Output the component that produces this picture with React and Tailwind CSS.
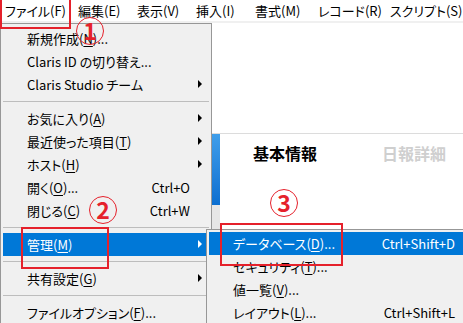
import React from "react";

const font = "font-['Noto_Sans_CJK_JP','Noto_Sans',sans-serif] [font-feature-settings:'palt']";

const menuBar = [
  { label: "ファイル(F)", w: "w-[73px]" },
  { label: "編集(E)", w: "w-[59px]" },
  { label: "表示(V)", w: "w-[59px]" },
  { label: "挿入(I)", w: "w-[59px]" },
  { label: "書式(M)", w: "w-[63px]" },
  { label: "レコード(R)", w: "w-[72px]" },
  { label: "スクリプト(S)", w: "w-[78px]" },
];

const fileMenu = [
  { pre: "新規作成(", key: "N", post: ")..." },
  { pre: "Claris ID の切り替え..." },
  { pre: "Claris Studio チーム", arrow: true },
  { sep: true },
  { pre: "お気に入り(", key: "A", post: ")", arrow: true },
  { pre: "最近使った項目(", key: "T", post: ")", arrow: true },
  { pre: "ホスト(", key: "H", post: ")", arrow: true },
  { pre: "開く(", key: "O", post: ")...", shortcut: "Ctrl+O" },
  { pre: "閉じる(", key: "C", post: ")", shortcut: "Ctrl+W" },
  { sep: true },
  { pre: "管理(", key: "M", post: ")", arrow: true, active: true },
  { sep: true },
  { pre: "共有設定(", key: "G", post: ")", arrow: true },
  { sep: true },
  { pre: "ファイルオプション(", key: "F", post: ")..." },
];

const manageMenu = [
  { pre: "データベース(", key: "D", post: ")...", shortcut: "Ctrl+Shift+D", active: true },
  { pre: "セキュリティ(", key: "T", post: ")..." },
  { pre: "値一覧(", key: "V", post: ")..." },
  { pre: "レイアウト(", key: "L", post: ")...", shortcut: "Ctrl+Shift+L" },
];

const Arrow = ({ white }) => (
  <svg width="4" height="8" viewBox="0 0 4 8" className="absolute right-[7px] top-[7px]">
    <polygon points="0,0 4,4 0,8" fill={white ? "#ffffff" : "#000000"} />
  </svg>
);

const MenuRow = ({ item, pl, pr }) => {
  if (item.sep) {
    return (
      <div className="h-[11px] flex items-center">
        <div className="w-full border-t border-[#bdbdbd]" />
      </div>
    );
  }
  return (
    <div
      className={`relative flex h-[23px] items-center leading-[23px] ${pl} ${pr} ${
        item.active ? "bg-[#0078d7] text-white" : "text-black"
      }`}
    >
      <span className="flex-1 whitespace-nowrap">
        {item.pre}
        {item.key && <u className="underline-offset-2">{item.key}</u>}
        {item.post}
      </span>
      {item.shortcut && <span className="whitespace-nowrap">{item.shortcut}</span>}
      {item.arrow && <Arrow white={item.active} />}
    </div>
  );
};

const Circle = ({ n, className }) => (
  <div
    className={`absolute flex h-[28px] w-[28px] items-center justify-center rounded-full border-[1.5px] border-[#e5212b] pb-[1px] text-[23px] font-bold leading-none text-[#e5212b] ${className}`}
  >
    {n}
  </div>
);

export default function App() {
  return (
    <div className={`relative h-[323px] w-[463px] overflow-hidden bg-white text-[13px] ${font}`}>
      {/* menu bar */}
      <div className="flex h-[23px] border-b-2 border-[#f0f0f0] bg-white">
        {menuBar.map((m) => (
          <div key={m.label} className={`${m.w} shrink-0 whitespace-nowrap pl-[5px] pt-[1px] leading-[20px] text-black`}>
            {m.label}
          </div>
        ))}
      </div>

      {/* window content behind the menus */}
      <div className="mt-[110px] flex h-[190px] border-t border-[#dcdcdc]">
        <div className="w-[220px] shrink-0 flex flex-col">
          <div className="h-[71px] bg-gradient-to-b from-[#3f9eea] to-[#0a6ed0]" />
          <div className="flex-1 bg-[#e6e6e6]" />
        </div>
        <div className="flex flex-1 items-start gap-[65px] pl-[33px] pt-[7px] text-[16px] font-bold leading-[24px]">
          <span className="text-black">基本情報</span>
          <span className="text-[#cfcfcf]">日報詳細</span>
        </div>
      </div>

      {/* file menu */}
      <div className="absolute left-0 top-[23px] w-[212px] border border-[#979797] bg-[#f0f0f0] px-[2px] pt-[3px] pb-[4px]">
        {fileMenu.map((item, i) => (
          <MenuRow key={i} item={item} pl="pl-[24px]" pr="pr-[19px]" />
        ))}
      </div>

      {/* manage submenu */}
      <div className="absolute left-[206px] top-[229px] w-[270px] border border-[#979797] bg-[#f0f0f0] px-[2px] pt-[2px] pb-[3px]">
        {manageMenu.map((item, i) => (
          <MenuRow key={i} item={item} pl="pl-[24px]" pr="pr-[18px]" />
        ))}
      </div>

      {/* annotations */}
      <div className="absolute left-0 top-[-2px] h-[31px] w-[71px] border-2 border-[#e5212b]" />
      <div className="absolute left-[21px] top-[227px] h-[42px] w-[88px] border-2 border-[#e5212b]" />
      <div className="absolute left-[220px] top-[223px] h-[43px] w-[123px] border-2 border-[#e5212b]" />
      <Circle n="1" className="left-[76px] top-[17px]" />
      <Circle n="2" className="left-[89px] top-[196px]" />
      <Circle n="3" className="left-[270px] top-[189px]" />
    </div>
  );
}
